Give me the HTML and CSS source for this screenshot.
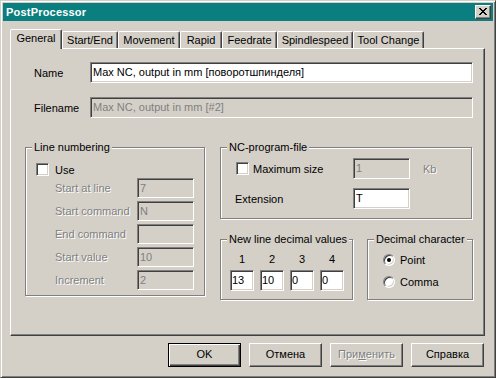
FILE: index.html
```html
<!DOCTYPE html>
<html>
<head>
<meta charset="utf-8">
<link rel="stylesheet" href="styles.css">
</head>
<body>
<div class="window">
  <div class="titlebar">
    <span class="title">PostProcessor</span>
    <div class="close">
      <svg width="8" height="7" viewBox="0 0 8 7"><path d="M0 0h2v1H0z M6 0h2v1H6z M1 1h2v1H1z M5 1h2v1H5z M2 2h4v1H2z M3 3h2v1H3z M2 4h4v1H2z M1 5h2v1H1z M5 5h2v1H5z M0 6h2v1H0z M6 6h2v1H6z" fill="#000"/></svg>
    </div>
  </div>
  <div class="body">
    <div class="tabs">
      <div class="tab selected t-general">General</div>
      <div class="tab t-startend">Start/End</div>
      <div class="tab t-movement">Movement</div>
      <div class="tab t-rapid">Rapid</div>
      <div class="tab t-feed">Feedrate</div>
      <div class="tab t-spindle">Spindlespeed</div>
      <div class="tab t-tool">Tool Change</div>
    </div>
    <div class="panel">
      <div class="field-row">
        <span class="lbl-top">Name</span>
        <div class="edit wide">Max NC, output in mm [поворотшпинделя]</div>
      </div>
      <div class="field-row second">
        <span class="lbl-top">Filename</span>
        <div class="edit wide disabled">Max NC, output in mm [#2]</div>
      </div>
      <div class="groups">
        <div class="group g-lines">
          <div class="gtitle">Line numbering</div>
          <div class="use-row"><div class="check"></div><span>Use</span></div>
          <div class="ln-rows">
            <div class="ln-row"><span class="ln-lbl dis">Start at line</span><div class="edit ln-edit disabled">7</div></div>
            <div class="ln-row"><span class="ln-lbl dis">Start command</span><div class="edit ln-edit disabled">N</div></div>
            <div class="ln-row"><span class="ln-lbl dis">End command</span><div class="edit ln-edit disabled"></div></div>
            <div class="ln-row"><span class="ln-lbl dis">Start value</span><div class="edit ln-edit disabled">10</div></div>
            <div class="ln-row"><span class="ln-lbl dis">Increment</span><div class="edit ln-edit disabled">2</div></div>
          </div>
        </div>
        <div class="right-col">
          <div class="group g-nc">
            <div class="gtitle">NC-program-file</div>
            <div class="nc-row max">
              <div class="check"></div>
              <span class="nc-chk-lbl">Maximum size</span>
              <div class="edit nc-edit disabled">1</div>
              <span class="kb dis">Kb</span>
            </div>
            <div class="nc-row ext">
              <span class="nc-lbl">Extension</span>
              <div class="edit nc-edit">T</div>
            </div>
          </div>
          <div class="row-bottom">
            <div class="group g-newline">
              <div class="gtitle">New line decimal values</div>
              <div class="cols">
                <div class="col"><span class="num">1</span><div class="edit small">13</div></div>
                <div class="col"><span class="num">2</span><div class="edit small">10</div></div>
                <div class="col"><span class="num">3</span><div class="edit small">0</div></div>
                <div class="col"><span class="num">4</span><div class="edit small">0</div></div>
              </div>
            </div>
            <div class="group g-decimal">
              <div class="gtitle">Decimal character</div>
              <div class="radios">
                <div class="radio-row"><div class="radio on"></div><span>Point</span></div>
                <div class="radio-row"><div class="radio"></div><span>Comma</span></div>
              </div>
            </div>
          </div>
        </div>
      </div>
    </div>
    <div class="buttons">
      <div class="btn default">OK</div>
      <div class="btn">Отмена</div>
      <div class="btn dis-btn">При<u>м</u>енить</div>
      <div class="btn">Справка</div>
    </div>
  </div>
</div>
</body>
</html>
```

FILE: styles.css
```css
html, body {
  margin: 0;
  padding: 0;
  background: #d4d0c8;
}
body {
  font-family: "Liberation Sans", Arial, sans-serif;
  font-size: 11px;
  color: #000;
}
.window {
  width: 496px;
  height: 378px;
  box-sizing: border-box;
  border: 1px solid;
  border-color: #d4d0c8 #404040 #404040 #d4d0c8;
  box-shadow: inset 1px 1px #fff, inset -1px -1px #808080;
  padding: 2px;
  background: #d4d0c8;
}
.titlebar {
  height: 18px;
  background: #0b7f80;
  display: flex;
  align-items: center;
  justify-content: space-between;
  padding: 0 2px 0 3px;
  color: #fff;
}
.title {
  font-weight: bold;
  font-size: 11px;
  letter-spacing: 0.2px;
}
.close {
  width: 16px;
  height: 14px;
  box-sizing: border-box;
  background: #d4d0c8;
  border: 1px solid;
  border-color: #fff #404040 #404040 #fff;
  box-shadow: inset -1px -1px #808080;
  display: flex;
  align-items: center;
  justify-content: center;
  padding: 0 1px 1px 0;
}
.close svg { display: block; }
.body {
  padding: 8px 0 0 7px;
}
.tabs {
  display: flex;
  align-items: flex-end;
  height: 19px;
}
.tab {
  box-sizing: border-box;
  height: 17px;
  border-top: 1px solid #fff;
  border-left: 1px solid #fff;
  border-right: 1px solid #404040;
  box-shadow: inset -1px 0 #808080;
  border-radius: 2px 2px 0 0;
  text-align: center;
  line-height: 16px;
  white-space: nowrap;
  background: #d4d0c8;
}
.tab.selected {
  height: 20px;
  margin-bottom: -1px;
  position: relative;
  z-index: 1;
  line-height: 17px;
}
.t-general { width: 52px; }
.t-startend { width: 56px; }
.t-movement { width: 62px; }
.t-rapid { width: 42px; }
.t-feed { width: 55px; }
.t-spindle { width: 76px; }
.t-tool { width: 71px; }

.panel {
  box-sizing: border-box;
  width: 475px;
  height: 288px;
  border-left: 1px solid #fff;
  border-top: 1px solid #fff;
  border-right: 1px solid #404040;
  border-bottom: 1px solid #404040;
  box-shadow: inset -1px -1px #808080;
  padding: 13px 0 0 14px;
}
.field-row {
  display: flex;
  align-items: center;
  padding-left: 9px;
}
.field-row.second {
  margin-top: 14px;
}
.lbl-top {
  width: 56px;
}
.edit {
  box-sizing: border-box;
  height: 21px;
  border: 1px solid;
  border-color: #808080 #fff #fff #808080;
  box-shadow: inset 1px 1px #404040, inset -1px -1px #d4d0c8;
  background: #fff;
  padding: 0 2px;
  line-height: 19px;
  white-space: nowrap;
  overflow: hidden;
}
.edit.disabled {
  background: #d4d0c8;
  color: #808080;
}
.edit.wide {
  width: 383px;
}
.dis {
  color: #808080;
  text-shadow: 1px 1px #fff;
}
.groups {
  display: flex;
  align-items: flex-start;
  margin-top: 29px;
}
.group {
  box-sizing: border-box;
  border: 1px solid #808080;
  box-shadow: inset 1px 1px #fff, 1px 1px #fff;
}
.gtitle {
  display: table;
  margin: -7px 0 0 6px;
  padding: 0 2px;
  line-height: 13px;
  height: 13px;
  background: #d4d0c8;
  white-space: nowrap;
}
.g-lines {
  width: 180px;
  height: 149px;
}
.check {
  box-sizing: border-box;
  width: 13px;
  height: 13px;
  border: 1px solid;
  border-color: #808080 #fff #fff #808080;
  box-shadow: inset 1px 1px #404040, inset -1px -1px #d4d0c8;
  background: #fff;
  flex: none;
}
.use-row {
  display: flex;
  align-items: center;
  gap: 6px;
  margin: 9px 0 0 10px;
  height: 13px;
}
.ln-rows {
  margin: 2px 0 0 29px;
  display: flex;
  flex-direction: column;
  gap: 3px;
}
.ln-row {
  display: flex;
  align-items: center;
}
.ln-lbl {
  width: 82px;
}
.ln-edit {
  width: 57px;
  height: 20px;
  line-height: 18px;
}
.right-col {
  margin-left: 15px;
  width: 253px;
}
.g-nc {
  width: 252px;
  height: 72px;
}
.nc-row {
  display: flex;
  align-items: center;
}
.nc-row.max {
  margin: 4px 0 0 15px;
}
.nc-chk-lbl {
  margin-left: 4px;
  width: 100px;
}
.nc-edit {
  width: 57px;
}
.kb {
  margin-left: 13px;
}
.nc-row.ext {
  margin: 9px 0 0 14px;
}
.nc-lbl {
  width: 118px;
}
.row-bottom {
  display: flex;
  margin-top: 20px;
}
.g-newline {
  width: 133px;
  height: 61px;
}
.g-decimal {
  width: 106px;
  height: 61px;
  margin-left: 14px;
}
.cols {
  display: flex;
  gap: 6px;
  margin: 7px 0 0 9px;
}
.col {
  display: flex;
  flex-direction: column;
  align-items: center;
  width: 24px;
}
.num {
  line-height: 13px;
  height: 13px;
  margin-bottom: 4px;
}
.edit.small {
  width: 24px;
  padding: 0 1px;
}
.radios {
  margin: 8px 0 0 15px;
  display: flex;
  flex-direction: column;
  gap: 10px;
}
.radio-row {
  display: flex;
  align-items: center;
  gap: 5px;
  height: 12px;
}
.radio {
  box-sizing: border-box;
  width: 12px;
  height: 12px;
  border-radius: 50%;
  border: 1px solid;
  border-color: #808080 #fff #fff #808080;
  box-shadow: inset 1px 1px #404040, inset -1px -1px #d4d0c8;
  background: #fff;
  display: flex;
  align-items: center;
  justify-content: center;
  flex: none;
}
.radio.on::after {
  content: "";
  width: 4px;
  height: 4px;
  border-radius: 50%;
  background: #000;
}
.buttons {
  display: flex;
  justify-content: flex-end;
  gap: 8px;
  margin: 7px 1px 0 0;
  width: 474px;
}
.btn {
  box-sizing: border-box;
  width: 73px;
  height: 24px;
  border: 1px solid;
  border-color: #fff #404040 #404040 #fff;
  box-shadow: inset -1px -1px #808080;
  text-align: center;
  line-height: 21px;
  background: #d4d0c8;
}
.btn.default {
  border-color: #000;
  box-shadow: inset 1px 1px #fff, inset -1px -1px #404040, inset -2px -2px #808080;
}
.btn.dis-btn {
  color: #808080;
  text-shadow: 1px 1px #fff;
}
```
